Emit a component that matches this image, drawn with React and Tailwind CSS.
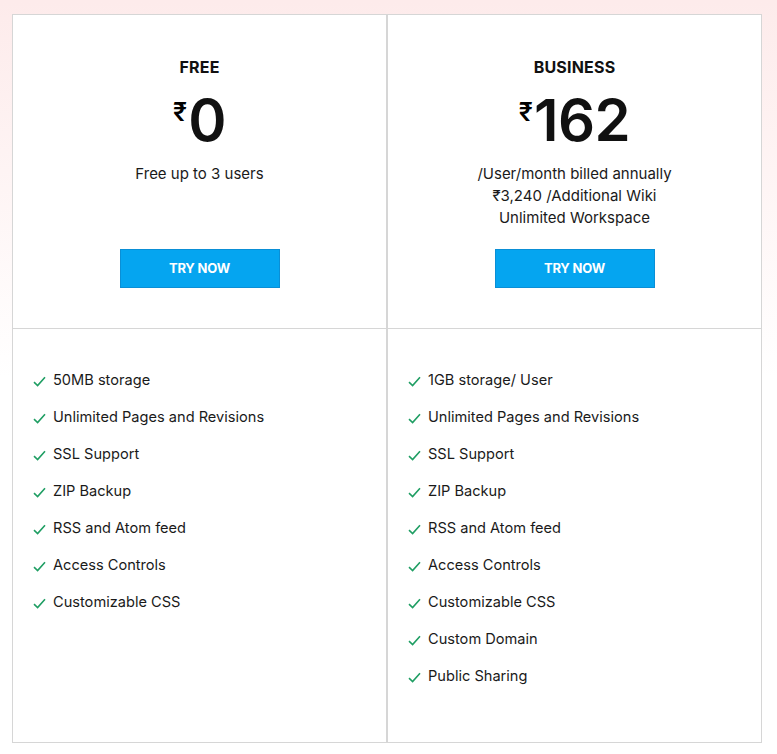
import React from "react";

const plans = [
  {
    name: "FREE",
    price: "0",
    notes: ["Free up to 3 users"],
    features: [
      "50MB storage",
      "Unlimited Pages and Revisions",
      "SSL Support",
      "ZIP Backup",
      "RSS and Atom feed",
      "Access Controls",
      "Customizable CSS",
    ],
  },
  {
    name: "BUSINESS",
    price: "162",
    notes: [
      "/User/month billed annually",
      "₹3,240 /Additional Wiki",
      "Unlimited Workspace",
    ],
    features: [
      "1GB storage/ User",
      "Unlimited Pages and Revisions",
      "SSL Support",
      "ZIP Backup",
      "RSS and Atom feed",
      "Access Controls",
      "Customizable CSS",
      "Custom Domain",
      "Public Sharing",
    ],
  },
];

function Check() {
  return (
    <svg width="13" height="11" viewBox="0 0 13 11" className="shrink-0">
      <path d="M1 6.2 L4.6 9.6 L12 1.2" fill="none" stroke="#1f9e63" strokeWidth="1.6" />
    </svg>
  );
}

function PlanCard({ plan }) {
  return (
    <div className="w-[375px] h-[729px] border border-[#d6d6d6] bg-white flex flex-col">
      <div className="h-[314px] border-b border-[#d6d6d6] flex flex-col items-center pt-[42px]">
        <h2 className="text-[16px] font-bold tracking-[0.2px] leading-[20px] text-[#111]">
          {plan.name}
        </h2>
        <div className="flex items-start mt-[11px] h-[64px]">
          <span className="text-[25px] leading-none mt-[12px] mr-[1px] font-semibold">₹</span>
          <span className="text-[58px] leading-[64px] font-semibold tracking-[-0.5px] text-[#111]">
            {plan.price}
          </span>
        </div>
        <div className="mt-[11px] text-center text-[15px] leading-[22px] text-[#1a1a1a] h-[66px]">
          {plan.notes.map((n) => (
            <p key={n}>{n}</p>
          ))}
        </div>
        <button className="mt-[20px] w-[160px] h-[39px] bg-[#05a5f0] border border-[#0a8fd6] text-white text-[13px] font-bold tracking-[-0.2px]">
          TRY NOW
        </button>
      </div>
      <ul className="pt-[41px] pl-[20px] flex flex-col gap-[15px]">
        {plan.features.map((f) => (
          <li key={f} className="flex items-center gap-[7px] h-[22px] text-[14.6px] text-[#1a1a1a]">
            <Check />
            <span>{f}</span>
          </li>
        ))}
      </ul>
    </div>
  );
}

export default function App() {
  return (
    <div
      className="min-h-[754px] w-[777px] bg-gradient-to-b from-[#fdebeb] via-white to-white pt-[14px] pl-[12px]"
      style={{ fontFamily: "Inter, 'Noto Sans', sans-serif" }}
    >
      <div className="flex">
        {plans.map((p) => (
          <PlanCard key={p.name} plan={p} />
        ))}
      </div>
    </div>
  );
}
